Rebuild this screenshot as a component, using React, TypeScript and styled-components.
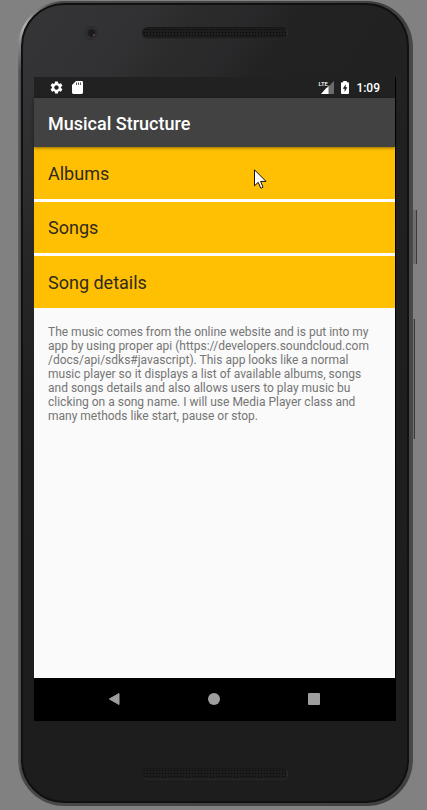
import React from "react";
import styled, { createGlobalStyle } from "styled-components";
import { MdSettings } from "react-icons/md";

const GlobalStyle = createGlobalStyle`
  *, *::before, *::after { box-sizing: border-box; }
  body {
    margin: 0;
    background: #818181;
    font-family: Roboto, "Liberation Sans", sans-serif;
  }
`;

const Page = styled.div`
  display: flex;
  flex-direction: column;
  min-height: 100vh;
  padding: 1px 14px 4px 18px;
`;

const Phone = styled.div`
  position: relative;
  flex: 1;
  display: flex;
  flex-direction: column;
  border-radius: 46px;
  padding: 2px 4px 3px 3px;
  background:
    radial-gradient(circle at 6px 26px, #b4b4b4 0, #8a8a8a 16px, transparent 44px),
    linear-gradient(to right, #626262 0, #484848 3px, #404040 98%, #4a4a4a 100%);
`;

const Body = styled.div`
  flex: 1;
  display: flex;
  flex-direction: column;
  border: 2px solid #101010;
  border-radius: 43px;
  padding: 0 11px;
  background:
    linear-gradient(to bottom, transparent 10%, #1d1d1d 75%),
    linear-gradient(125deg, #353537 0%, #313133 14%, #2b2b2b 19%, #29292b 25%, #222 30%, #1e1e1e 100%);
`;

const TopBezel = styled.div`
  position: relative;
  display: flex;
  justify-content: center;
  height: 72px;
  padding-top: 22px;
`;

const BottomBezel = styled.div`
  display: flex;
  justify-content: center;
  height: 80px;
  padding-top: 47px;
`;

const Grille = styled.div`
  width: 146px;
  height: 12px;
  border-radius: 6px;
  border: 1px solid #181818;
  border-right-color: #303030;
  border-bottom-color: #272727;
  background: radial-gradient(circle, #070707 0 1px, #1d1d1d 1px) 0 0 / 3px 3px;
`;

const Camera = styled.div`
  position: absolute;
  top: 21px;
  left: 50px;
  width: 14px;
  height: 14px;
  border-radius: 50%;
  border: 1px solid #29292b;
  background: radial-gradient(circle at 55% 50%, #1b191b 0 3px, #303032 5px);

  &::after {
    content: "";
    position: absolute;
    right: 2px;
    bottom: 3px;
    width: 2px;
    height: 2px;
    border-radius: 50%;
    background: #694b4e;
  }
`;

const SideButton = styled.div<{ $top: number; $height: number; $width: number }>`
  position: absolute;
  left: 100%;
  top: ${(p) => p.$top}px;
  width: ${(p) => p.$width}px;
  height: ${(p) => p.$height}px;
  border-right: 1px solid #3a3a3a;
  background: #6e6e6e;
`;

const Screen = styled.div`
  position: relative;
  flex: 1;
  display: flex;
  flex-direction: column;
  background: #000;
`;

const AppArea = styled.div`
  flex: 1;
  display: flex;
  flex-direction: column;
  margin-right: 1px;
  background: #fafafa;
`;

const StatusBar = styled.div`
  display: flex;
  align-items: center;
  justify-content: space-between;
  height: 21px;
  padding: 0 15px;
  background: #212121;
  color: #fff;
  font-size: 12px;
  font-weight: 500;
`;

const StatusGroup = styled.div<{ $gap: number }>`
  display: flex;
  align-items: center;
  gap: ${(p) => p.$gap}px;
`;

const AppBar = styled.header`
  position: relative;
  display: flex;
  align-items: center;
  height: 49px;
  padding: 0 14px;
  background: #424242;
  box-shadow: 0 1px 3px rgba(0, 0, 0, 0.45);
`;

const Title = styled.h1`
  margin: 0;
  padding-top: 2px;
  color: #fff;
  font-size: 18px;
  font-weight: 500;
  line-height: 24px;
`;

const Menu = styled.nav`
  display: grid;
  grid-auto-rows: 1fr;
  gap: 3px;
  min-height: 161px;
  background: #fff;
`;

const MenuItem = styled.button`
  border: 0;
  padding: 2px 14px 0;
  background: #ffc003;
  color: #2f2a1d;
  font-family: inherit;
  font-size: 18px;
  line-height: 24px;
  text-align: left;
`;

const Description = styled.p`
  margin: 0;
  padding: 17px 14px;
  color: #757575;
  font-size: 12px;
  line-height: 14px;
  overflow-wrap: anywhere;
`;

const NavBar = styled.div`
  display: flex;
  align-items: center;
  justify-content: center;
  gap: 76px;
  height: 43px;
  padding: 0 2px 2px 0;
`;

const NavButton = styled.button`
  display: flex;
  align-items: center;
  justify-content: center;
  width: 24px;
  height: 24px;
  border: 0;
  padding: 0;
  background: none;
  color: #9e9e9e;
`;

const Pointer = styled.svg`
  position: absolute;
  left: 220px;
  top: 92px;
`;

const SdIcon = () => (
  <svg width="11" height="13" viewBox="0 0 11 13" aria-hidden="true">
    <path d="M4 0h5.6Q11 0 11 1.4v10.2q0 1.4-1.4 1.4H1.4Q0 13 0 11.600V4z" fill="#fff" />
    <path d="M4.500 1.500v2.500M6.500 1.500v2.500M8.500 1.500v2.500" stroke="#555" strokeWidth="1" />
  </svg>
);

const Signal = styled.div`
  position: relative;
  width: 16px;
  height: 13px;
`;

const SignalText = styled.span`
  position: absolute;
  left: 0;
  top: 0;
  font-size: 6px;
  line-height: 6px;
  font-weight: 500;
`;

const SignalIcon = () => (
  <Signal>
    <svg width="16" height="13" viewBox="0 0 16 13" aria-hidden="true">
      <path d="M16 0v13H3z" fill="#6b6b6b" />
      <path d="M10.500 4.500V13H3z" fill="#fff" />
      <path d="M0 0h9.500v6.500H0z" fill="#212121" />
    </svg>
    <SignalText>LTE</SignalText>
  </Signal>
);

const BatteryIcon = () => (
  <svg width="8" height="13" viewBox="0 0 8 13" aria-hidden="true">
    <path d="M2.200 0h3.600v1.300H7q1 0 1 1V12q0 1-1 1H1q-1 0-1-1V2.300q0-1 1-1h1.200z" fill="#fff" />
    <path d="M4.700 3.200L1.800 7.700h1.800v3.300l2.800-4.700H4.700z" fill="#212121" />
  </svg>
);

const items = ["Albums", "Songs", "Song details"];

export default function App() {
  return (
    <>
      <GlobalStyle />
      <Page>
        <Phone>
          <SideButton $top={209} $height={54} $width={4} />
          <SideButton $top={318} $height={120} $width={2} />
          <Body>
            <TopBezel>
              <Camera />
              <Grille />
            </TopBezel>
            <Screen>
              <AppArea>
                <StatusBar>
                  <StatusGroup $gap={8}>
                    <MdSettings size={15} aria-hidden="true" />
                    <SdIcon />
                  </StatusGroup>
                  <StatusGroup $gap={7}>
                    <SignalIcon />
                    <BatteryIcon />
                    <time>1:09</time>
                  </StatusGroup>
                </StatusBar>
                <AppBar>
                  <Title>Musical Structure</Title>
                </AppBar>
                <Menu>
                  {items.map((item) => (
                    <MenuItem key={item} type="button">
                      {item}
                    </MenuItem>
                  ))}
                </Menu>
                <Description>
                  The music comes from the online website and is put into my app by using proper api
                  (https://developers.soundcloud.com<wbr />/docs/api/sdks#javascript). This app looks
                  like a normal music player so it displays a list of available albums, songs and
                  songs details and also allows users to play music bu clicking on a song name. I
                  will use Media Player class and many methods like start, pause or stop.
                </Description>
              </AppArea>
              <NavBar>
                <NavButton type="button" aria-label="Back">
                  <svg width="12" height="14" viewBox="0 0 12 14" aria-hidden="true">
                    <path
                      d="M11 1.500v11L1.300 7z"
                      fill="currentColor"
                      stroke="currentColor"
                      strokeLinejoin="round"
                    />
                  </svg>
                </NavButton>
                <NavButton type="button" aria-label="Home">
                  <svg width="12" height="12" viewBox="0 0 12 12" aria-hidden="true">
                    <circle cx="6" cy="6" r="6" fill="currentColor" />
                  </svg>
                </NavButton>
                <NavButton type="button" aria-label="Recent apps">
                  <svg width="12" height="12" viewBox="0 0 12 12" aria-hidden="true">
                    <rect width="12" height="12" rx="1" fill="currentColor" />
                  </svg>
                </NavButton>
              </NavBar>
              <Pointer width="13" height="20" viewBox="0 0 13 20" aria-hidden="true">
                <path
                  d="M.5.8v16l3.700-3.500 2.500 5.700q1.300.6 2.300-1L6.600 12.400H12z"
                  fill="#fff"
                  stroke="#111"
                  strokeWidth="1"
                />
              </Pointer>
            </Screen>
            <BottomBezel>
              <Grille />
            </BottomBezel>
          </Body>
        </Phone>
      </Page>
    </>
  );
}
